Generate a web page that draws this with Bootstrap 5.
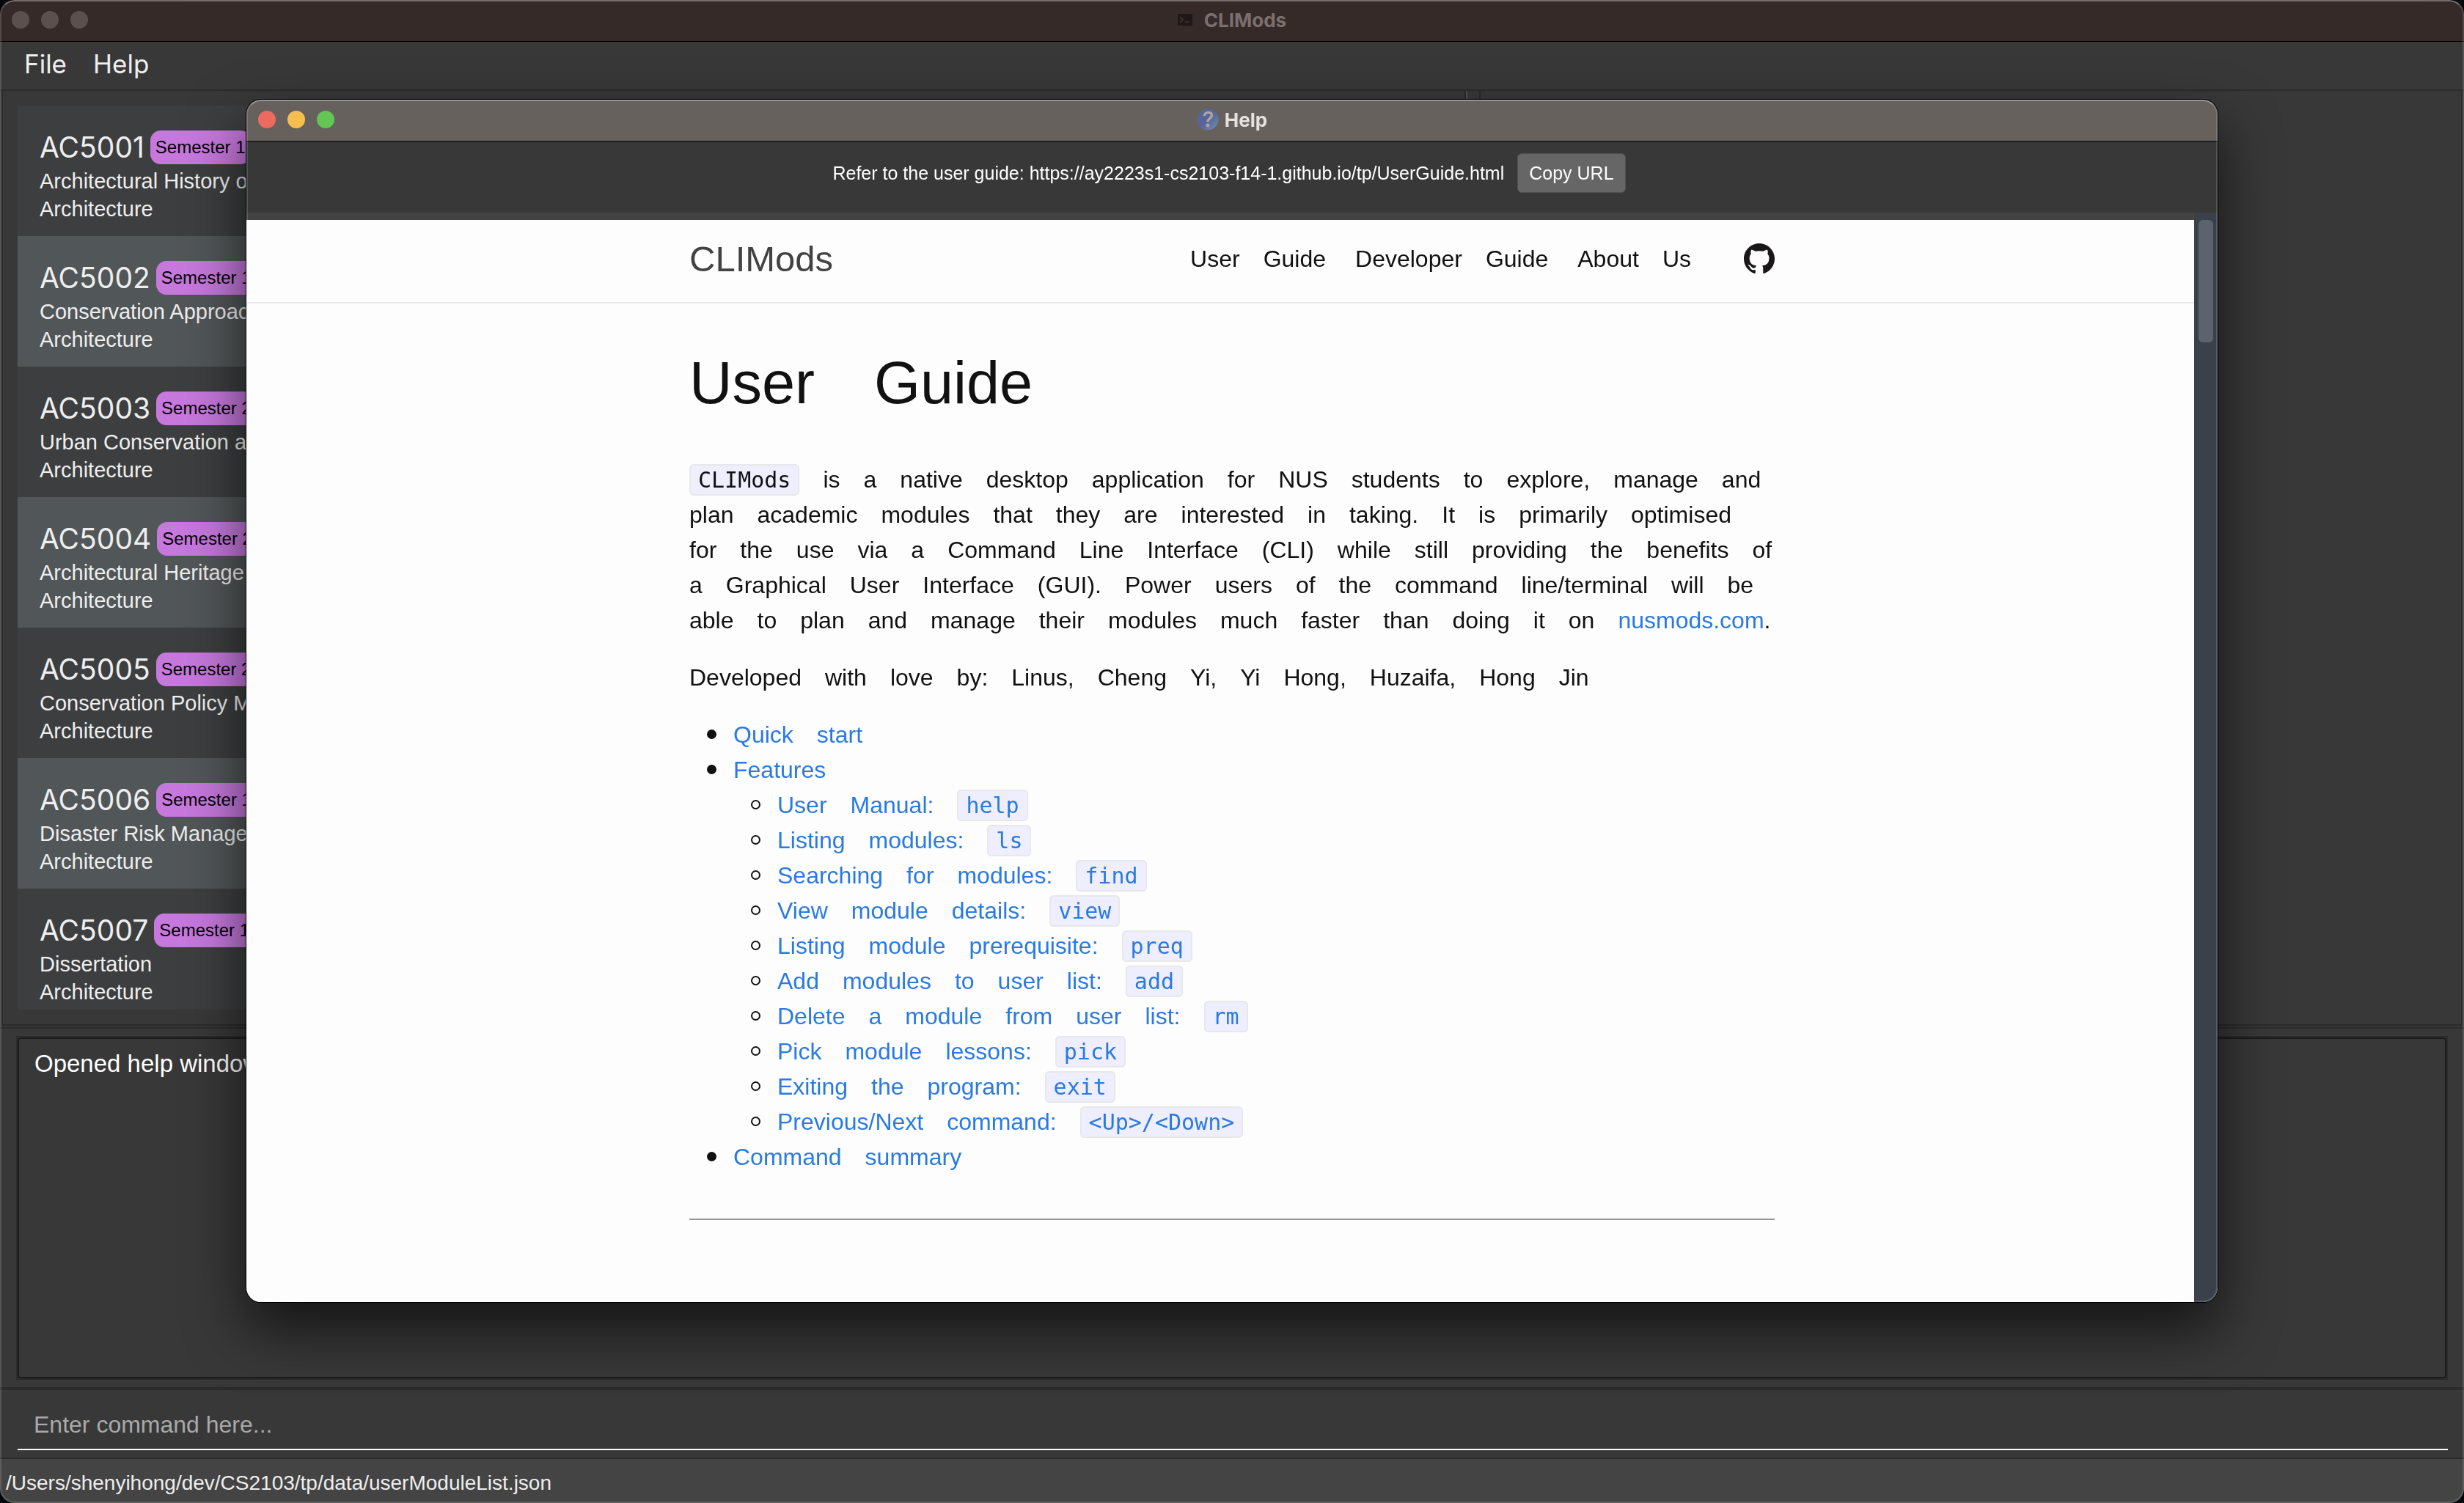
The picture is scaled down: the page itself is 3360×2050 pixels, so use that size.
<!DOCTYPE html>
<html lang="en">
<head>
<meta charset="utf-8">
<meta name="viewport" content="width=device-width, initial-scale=1">
<title>CLIMods</title>
<link href="https://cdn.jsdelivr.net/npm/bootstrap@5.3.0/dist/css/bootstrap.min.css" rel="stylesheet">
<style>
:root{--ui:Inter,"Liberation Sans",sans-serif;--ui-tight:"Liberation Sans",Arial,sans-serif;--panel:#383838;--line:#2b2b2b}
body{background:#05070c;font-family:var(--ui-tight);color:#eee;overflow:hidden}
.app-window{background:var(--panel);border-radius:20px;overflow:hidden;position:relative}
.app-window::after{content:"";position:absolute;inset:0;border:2px solid rgba(255,255,255,.15);border-top-color:rgba(255,255,255,.32);border-radius:inherit;pointer-events:none}
.title-bar{height:57px;padding:0 16px 2px;border-bottom:1px solid #000;background:#352a28;color:#7b706e;font:700 26px/53px var(--ui)}
.title-bar .lights,.title-bar .spacer{flex:1 1 0}
.lights{gap:16px}
.lights i{width:24px;height:24px;border-radius:50%;background:#5b504e}
.light-close{background:#ed6a5f!important}
.light-min{background:#f5bf4f!important}
.light-zoom{background:#62c554!important}
.menus{height:67px;padding:0 33px 4px;gap:36px;border-bottom:2px solid var(--line)}
.menus a{font:400 35px/60px var(--ui);color:#eee;text-decoration:none}
.split-area{flex:13 1 0;min-height:0;padding:0 2px}
.pane-box{border:2px solid var(--line);border-top:0;padding:20px}
.pane-list{flex:0 0 59.5%}
.pane-gap{flex:0 0 18px;border-left:2px solid #4d4d4d}
.modules{overflow:hidden}
.module-row{background:#3c3e3f;padding:34px 30px 18px}
.module-row:nth-child(even){background:#515658}
.module-head{height:46px;gap:8px;margin-bottom:4px}
.code-name{font:400 39px/46px var(--ui)}
.sem-tag{background:#c678dd;color:#000;border-radius:14px;padding:0 7px;font-size:24px;line-height:46px;white-space:nowrap}
.module-row p{font-size:29px;line-height:38px;margin:0}
.result-area{flex:5 1 0;min-height:0;padding-top:2px}
.result-in{border-top:2px solid var(--line);padding:10px 22px}
.result-frame{border:2px solid var(--line)}
.result-frame textarea{border:2px solid #1c1c1c;border-radius:4px;background:transparent;color:#fff;font-size:33px;line-height:40px;padding:14px 21px;resize:none;outline:0}
.command-area{border-top:4px solid var(--line);border-bottom:2px solid var(--line);padding:14px 22px 10px 24px}
.command-area input{height:68px;border:0;border-bottom:2px solid #fff;background:transparent;color:#fff;font-size:32px;padding:0 22px;outline:0}
.command-area input::placeholder{color:#a9a9a9;opacity:1}
.path-bar{height:60px;background:#444;padding:3px 8px 0;font-size:28px;line-height:60px}
/* Help window floats over the main window */
.help-window{position:fixed;left:10vw;top:136px;width:80vw;height:80vh;box-shadow:0 0 0 1px #000,0 36px 80px rgba(0,0,0,.65)}
.help-window .title-bar{background:#67615e;color:#e6e0de}
.help-tools{height:97px;padding:16px 8px 0 0;gap:18px;font-size:25px;line-height:54px;color:#fff}
.help-tools button{height:54px;padding:0 15px;border:1px solid #505050;border-radius:6px;background:#666;color:#fff;font-size:25px;line-height:50px}
.web-holder{border-top:10px solid #434343;min-height:0;position:relative}
.web-page{background:#fdfdfd;color:#111;font:400 32px/48px "Liberation Sans",Arial,sans-serif;overflow:hidden}
.scroll-track{position:absolute;top:-10px;right:0;bottom:0;width:32px;background:#3b414b;padding:10px 6px}
.scroll-thumb{height:167px;border-radius:6px;background:#5d636e}
.site-top{border-bottom:2px solid #e8e8e8;height:114px}
.wrap-col{max-width:1480px;margin:0 auto}
.site-top .wrap-col{height:106px}
.site-name{font-size:49px;color:#424242;text-decoration:none}
.site-nav{gap:40px}
.site-nav a{color:#111;text-decoration:none}
.site-nav .gh{margin-left:32px;display:flex}
.doc{padding:60px 0}
.doc h1{font-size:81px;line-height:96px;font-weight:400;margin:0 0 60px}
.doc p{margin:0 0 30px}
.doc a{color:#2a7ae2;text-decoration:none}
.doc ul{margin:0;padding-left:60px;list-style:none}
.doc li{position:relative}
.doc li::before{content:"";position:absolute;left:-36px;top:17px;width:13px;height:13px;border:2px solid #111;border-radius:50%;background:#111}
.doc li li::before{background:none}
.doc code{font:400 30px/40px "DejaVu Sans Mono",monospace;color:inherit;background:#eef;border:2px solid #e8e8e8;border-radius:6px;padding:2px 10px}
.doc hr{margin:60px 0;border:0;border-top:2px solid #999;opacity:1}
</style>
<script src="https://cdn.jsdelivr.net/npm/bootstrap@5.3.0/dist/js/bootstrap.bundle.min.js"></script>
</head>
<body>
<div class="app-window vh-100 d-flex flex-column">
  <header class="title-bar d-flex align-items-center flex-shrink-0">
    <div class="lights d-flex"><i></i><i></i><i></i></div>
    <div class="d-flex align-items-center gap-3">
      <svg width="20" height="16" viewBox="0 0 20 16" aria-hidden="true"><rect width="20" height="16" rx="1" fill="#1e1816"/><path d="M3 4l4 4-4 4M10 11h6" fill="none" stroke="#3f3735" stroke-width="1.6"/></svg>
      <span>CLIMods</span>
    </div>
    <div class="spacer"></div>
  </header>
  <nav class="menus d-flex flex-shrink-0"><a href="#file">File</a><a href="#help">Help</a></nav>
  <main class="split-area d-flex">
    <section class="pane-box pane-list d-flex">
      <div class="modules flex-grow-1">
        <article class="module-row"><div class="module-head d-flex"><span class="code-name">AC5001</span><span class="sem-tag">Semester 1</span></div><p>Architectural History of</p><p>Architecture</p></article>
        <article class="module-row"><div class="module-head d-flex"><span class="code-name">AC5002</span><span class="sem-tag">Semester 1</span></div><p>Conservation Approac</p><p>Architecture</p></article>
        <article class="module-row"><div class="module-head d-flex"><span class="code-name">AC5003</span><span class="sem-tag">Semester 2</span></div><p>Urban Conservation an</p><p>Architecture</p></article>
        <article class="module-row"><div class="module-head d-flex"><span class="code-name">AC5004</span><span class="sem-tag">Semester 2</span></div><p>Architectural Heritage</p><p>Architecture</p></article>
        <article class="module-row"><div class="module-head d-flex"><span class="code-name">AC5005</span><span class="sem-tag">Semester 2</span></div><p>Conservation Policy M</p><p>Architecture</p></article>
        <article class="module-row"><div class="module-head d-flex"><span class="code-name">AC5006</span><span class="sem-tag">Semester 1</span></div><p>Disaster Risk Managem</p><p>Architecture</p></article>
        <article class="module-row"><div class="module-head d-flex"><span class="code-name">AC5007</span><span class="sem-tag">Semester 1</span></div><p>Dissertation</p><p>Architecture</p></article>
      </div>
    </section>
    <div class="pane-gap"></div>
    <section class="pane-box flex-grow-1"></section>
  </main>
  <section class="result-area">
    <div class="result-in h-100">
      <div class="result-frame h-100"><textarea class="d-block w-100 h-100" readonly aria-label="Result">Opened help window.</textarea></div>
    </div>
  </section>
  <section class="command-area flex-shrink-0"><input class="d-block w-100" type="text" placeholder="Enter command here..." aria-label="Command"></section>
  <footer class="path-bar flex-shrink-0">/Users/shenyihong/dev/CS2103/tp/data/userModuleList.json</footer>
</div>

<div class="app-window help-window d-flex flex-column" role="dialog" aria-label="Help">
  <header class="title-bar d-flex align-items-center flex-shrink-0">
    <div class="lights d-flex"><i class="light-close"></i><i class="light-min"></i><i class="light-zoom"></i></div>
    <div class="d-flex align-items-center gap-2">
      <svg width="30" height="30" viewBox="0 0 30 30" aria-hidden="true"><defs><linearGradient id="ball" x1="0" y1="0" x2="1" y2="1"><stop offset="0" stop-color="#5a6391"/><stop offset=".5" stop-color="#56659a"/><stop offset="1" stop-color="#7090a8"/></linearGradient></defs><circle cx="15" cy="15" r="14.500" fill="url(#ball)"/><path d="M10.500 10c0-6 10-6 10-1 0 4.500-5.500 4-5.500 9" fill="none" stroke="#b0a7a3" stroke-width="3.400"/><circle cx="15" cy="23" r="2.400" fill="#b0a7a3"/></svg>
      <span>Help</span>
    </div>
    <div class="spacer"></div>
  </header>
  <div class="help-tools d-flex justify-content-center align-items-start flex-shrink-0">
    <label for="copy">Refer to the user guide: https://ay2223s1-cs2103-f14-1.github.io/tp/UserGuide.html</label>
    <button type="button" id="copy">Copy URL</button>
  </div>
  <div class="web-holder flex-grow-1">
    <div class="web-page h-100">
      <header class="site-top">
        <div class="wrap-col d-flex align-items-center justify-content-between">
          <a class="site-name" href="#top">CLIMods</a>
          <nav class="site-nav d-flex align-items-center">
            <a href="#ug">User&emsp;Guide</a><a href="#dg">Developer&emsp;Guide</a><a href="#about">About&emsp;Us</a>
            <a class="gh" href="#github" aria-label="GitHub"><svg width="42" height="42" viewBox="0 0 16 16" fill="#191717"><path d="M8 0C3.58 0 0 3.58 0 8c0 3.54 2.29 6.53 5.47 7.59.4.07.55-.17.55-.38 0-.19-.01-.82-.01-1.49-2.01.37-2.53-.49-2.69-.94-.09-.23-.48-.94-.82-1.13-.28-.15-.68-.52-.01-.53.63-.01 1.08.58 1.23.82.72 1.21 1.87.87 2.33.66.07-.52.28-.87.51-1.07-1.78-.2-3.64-.89-3.64-3.95 0-.87.31-1.59.82-2.15-.08-.2-.36-1.02.08-2.12 0 0 .67-.21 2.2.82.64-.18 1.32-.27 2-.27s1.36.09 2 .27c1.530-1.040 2.200-.820 2.200-.820.440 1.100.160 1.920.080 2.120.510.560.820 1.270.820 2.150 0 3.070-1.870 3.750-3.650 3.950.290.250.540.730.540 1.480 0 1.070-.010 1.930-.010 2.200 0 .210.150.460.550.380A8.010 8.010 0 0 0 16 8c0-4.420-3.580-8-8-8z"/></svg></a>
          </nav>
        </div>
      </header>
      <article class="doc wrap-col">
        <h1>User&emsp;Guide</h1>
        <p><code>CLIMods</code>&emsp;is&emsp;a&emsp;native&emsp;desktop&emsp;application&emsp;for&emsp;NUS&emsp;students&emsp;to&emsp;explore,&emsp;manage&emsp;and<br>
        plan&emsp;academic&emsp;modules&emsp;that&emsp;they&emsp;are&emsp;interested&emsp;in&emsp;taking.&emsp;It&emsp;is&emsp;primarily&emsp;optimised<br>
        for&emsp;the&emsp;use&emsp;via&emsp;a&emsp;Command&emsp;Line&emsp;Interface&emsp;(CLI)&emsp;while&emsp;still&emsp;providing&emsp;the&emsp;benefits&emsp;of<br>
        a&emsp;Graphical&emsp;User&emsp;Interface&emsp;(GUI).&emsp;Power&emsp;users&emsp;of&emsp;the&emsp;command&emsp;line/terminal&emsp;will&emsp;be<br>
        able&emsp;to&emsp;plan&emsp;and&emsp;manage&emsp;their&emsp;modules&emsp;much&emsp;faster&emsp;than&emsp;doing&emsp;it&emsp;on&emsp;<a href="#nusmods">nusmods.com</a>.</p>
        <p>Developed&emsp;with&emsp;love&emsp;by:&emsp;Linus,&emsp;Cheng&emsp;Yi,&emsp;Yi&emsp;Hong,&emsp;Huzaifa,&emsp;Hong&emsp;Jin</p>
        <ul>
          <li><a href="#quick">Quick&emsp;start</a></li>
          <li><a href="#features">Features</a>
            <ul>
              <li><a href="#help">User&emsp;Manual:&emsp;<code>help</code></a></li>
              <li><a href="#ls">Listing&emsp;modules:&emsp;<code>ls</code></a></li>
              <li><a href="#find">Searching&emsp;for&emsp;modules:&emsp;<code>find</code></a></li>
              <li><a href="#view">View&emsp;module&emsp;details:&emsp;<code>view</code></a></li>
              <li><a href="#preq">Listing&emsp;module&emsp;prerequisite:&emsp;<code>preq</code></a></li>
              <li><a href="#add">Add&emsp;modules&emsp;to&emsp;user&emsp;list:&emsp;<code>add</code></a></li>
              <li><a href="#rm">Delete&emsp;a&emsp;module&emsp;from&emsp;user&emsp;list:&emsp;<code>rm</code></a></li>
              <li><a href="#pick">Pick&emsp;module&emsp;lessons:&emsp;<code>pick</code></a></li>
              <li><a href="#exit">Exiting&emsp;the&emsp;program:&emsp;<code>exit</code></a></li>
              <li><a href="#keys">Previous/Next&emsp;command:&emsp;<code>&lt;Up&gt;/&lt;Down&gt;</code></a></li>
            </ul>
          </li>
          <li><a href="#summary">Command&emsp;summary</a></li>
        </ul>
        <hr>
      </article>
    </div>
    <div class="scroll-track"><div class="scroll-thumb"></div></div>
  </div>
</div>
</body>
</html>
